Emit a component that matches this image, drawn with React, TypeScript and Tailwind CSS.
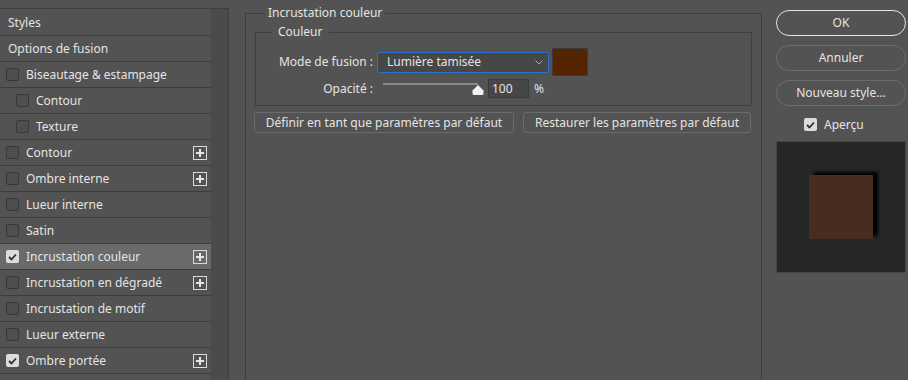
import React from "react";

const Check = ({ checked }: { checked?: boolean }) =>
  checked ? (
    <div className="w-[13px] h-[13px] rounded-[2px] bg-[#dcdcdc] flex items-center justify-center shrink-0">
      <svg width="9" height="8" viewBox="0 0 9 8">
        <path d="M1 4 L3.5 6.5 L8 1.5" stroke="#2f2f2f" strokeWidth="1.8" fill="none" />
      </svg>
    </div>
  ) : (
    <div className="w-[13px] h-[13px] rounded-[2px] border border-[#383838] bg-[#4e4e4e] shrink-0" />
  );

const Plus = () => (
  <div className="w-[14px] h-[14px] border border-[#d9d9d9] flex items-center justify-center shrink-0">
    <svg width="10" height="10" viewBox="0 0 10 10">
      <path d="M5 1 V9 M1 5 H9" stroke="#e6e6e6" strokeWidth="2" />
    </svg>
  </div>
);

type Item = { label: string; check?: boolean; checked?: boolean; sub?: boolean; plus?: boolean; active?: boolean };

const items: Item[] = [
  { label: "Styles" },
  { label: "Options de fusion" },
  { label: "Biseautage & estampage", check: true },
  { label: "Contour", check: true, sub: true },
  { label: "Texture", check: true, sub: true },
  { label: "Contour", check: true, plus: true },
  { label: "Ombre interne", check: true, plus: true },
  { label: "Lueur interne", check: true },
  { label: "Satin", check: true },
  { label: "Incrustation couleur", check: true, checked: true, plus: true, active: true },
  { label: "Incrustation en dégradé", check: true, plus: true },
  { label: "Incrustation de motif", check: true },
  { label: "Lueur externe", check: true },
  { label: "Ombre portée", check: true, checked: true, plus: true },
];

export default function App() {
  return (
    <div className="w-[908px] h-[380px] bg-[#535353] flex overflow-hidden text-[12px] text-[#e4e4e4] font-['Noto_Sans',sans-serif] leading-[16px]">
      {/* left list */}
      <div className="mt-[8px] w-[229px] h-[380px] border-t border-r border-[#3f3f3f] flex shrink-0">
        <div className="w-[211px] pt-[1px] flex flex-col">
          {items.map((it, i) => (
            <div
              key={i}
              className={`h-[26px] border-b border-[#3d3d3d] flex items-center pr-[4px] ${it.active ? "bg-[#6a6a6a]" : ""}`}
            >
              {it.check ? (
                <div className={`flex items-center gap-[7px] flex-1 ${it.sub ? "pl-[16px]" : "pl-[6px]"}`}>
                  <Check checked={it.checked} />
                  <span>{it.label}</span>
                </div>
              ) : (
                <span className="pl-[8px] flex-1">{it.label}</span>
              )}
              {it.plus && <Plus />}
            </div>
          ))}
        </div>
        <div className="w-[17px] bg-[#4b4b4b]" />
      </div>

      {/* main */}
      <fieldset className="ml-[16px] mt-[5px] w-[517px] h-[420px] border border-[#3f3f3f] shrink-0">
        <legend className="ml-[19px] px-[3px] leading-[16px]">Incrustation couleur</legend>
        <fieldset className="mt-[3px] mx-[9px] border border-[#3f3f3f] pb-[7px]">
          <legend className="ml-[16px] px-[6px] leading-[16px]">Couleur</legend>
          <div className="flex items-center mt-[8px] h-[28px]">
            <div className="w-[117px] text-right">Mode de fusion :</div>
            <div className="ml-[4px] w-[172px] h-[21px] border border-[#2a72c9] rounded-[2px] bg-[#474747] flex items-center pl-[9px] pr-[5px] justify-between">
              <span>Lumière tamisée</span>
              <svg width="8" height="5" viewBox="0 0 8 5">
                <path d="M0.5 0.5 L4 4 L7.5 0.5" stroke="#a8a8a8" strokeWidth="1" fill="none" />
              </svg>
            </div>
            <div className="ml-[3px] w-[36px] h-[28px] bg-[#552400] border border-[#3b3b3b]" />
          </div>
          <div className="flex items-center mt-[3px] h-[19px]">
            <div className="w-[117px] text-right">Opacité :</div>
            <div className="ml-[10px] w-[101px] h-[19px] relative">
              <div className="absolute left-0 top-[4px] w-[95px] h-[2px] bg-[#8a8a8a]" />
              <svg className="absolute left-[89px] top-[6px]" width="12" height="10" viewBox="0 0 12 10">
                <path d="M6 0 L11.5 5.5 V8.5 Q11.5 10 10 10 H2 Q0.5 10 0.5 8.5 V5.5 Z" fill="#f2f2f2" />
              </svg>
            </div>
            <div className="ml-[4px] w-[41px] h-[19px] bg-[#474747] border border-[#3b3b3b] flex items-center pl-[3px]">
              100
            </div>
            <span className="ml-[5px]">%</span>
          </div>
        </fieldset>
        <div className="flex mt-[6px] ml-[8px] gap-[9px]">
          <div className="w-[260px] h-[21px] border border-[#6b6b6b] rounded-[3px] flex items-center justify-center">
            Définir en tant que paramètres par défaut
          </div>
          <div className="w-[228px] h-[21px] border border-[#6b6b6b] rounded-[3px] flex items-center justify-center">
            Restaurer les paramètres par défaut
          </div>
        </div>
      </fieldset>

      {/* right column */}
      <div className="ml-[14px] mt-[10px] w-[130px] flex flex-col shrink-0">
        <div className="h-[26px] rounded-full border border-[#e4e4e4] flex items-center justify-center">OK</div>
        <div className="mt-[9px] h-[26px] rounded-full border border-[#6d6d6d] flex items-center justify-center">Annuler</div>
        <div className="mt-[9px] h-[26px] rounded-full border border-[#6d6d6d] flex items-center justify-center">Nouveau style...</div>
        <div className="mt-[12px] h-[13px] flex items-center gap-[7px] pl-[28px]">
          <Check checked />
          <span>Aperçu</span>
        </div>
        <div className="mt-[10px] h-[132px] bg-[#262626] border border-[#464646] flex items-center justify-center">
          <div className="w-[64px] h-[64px] bg-[#472d20] shadow-[5px_-3px_3px_rgba(0,0,0,0.95)]" />
        </div>
      </div>
    </div>
  );
}
